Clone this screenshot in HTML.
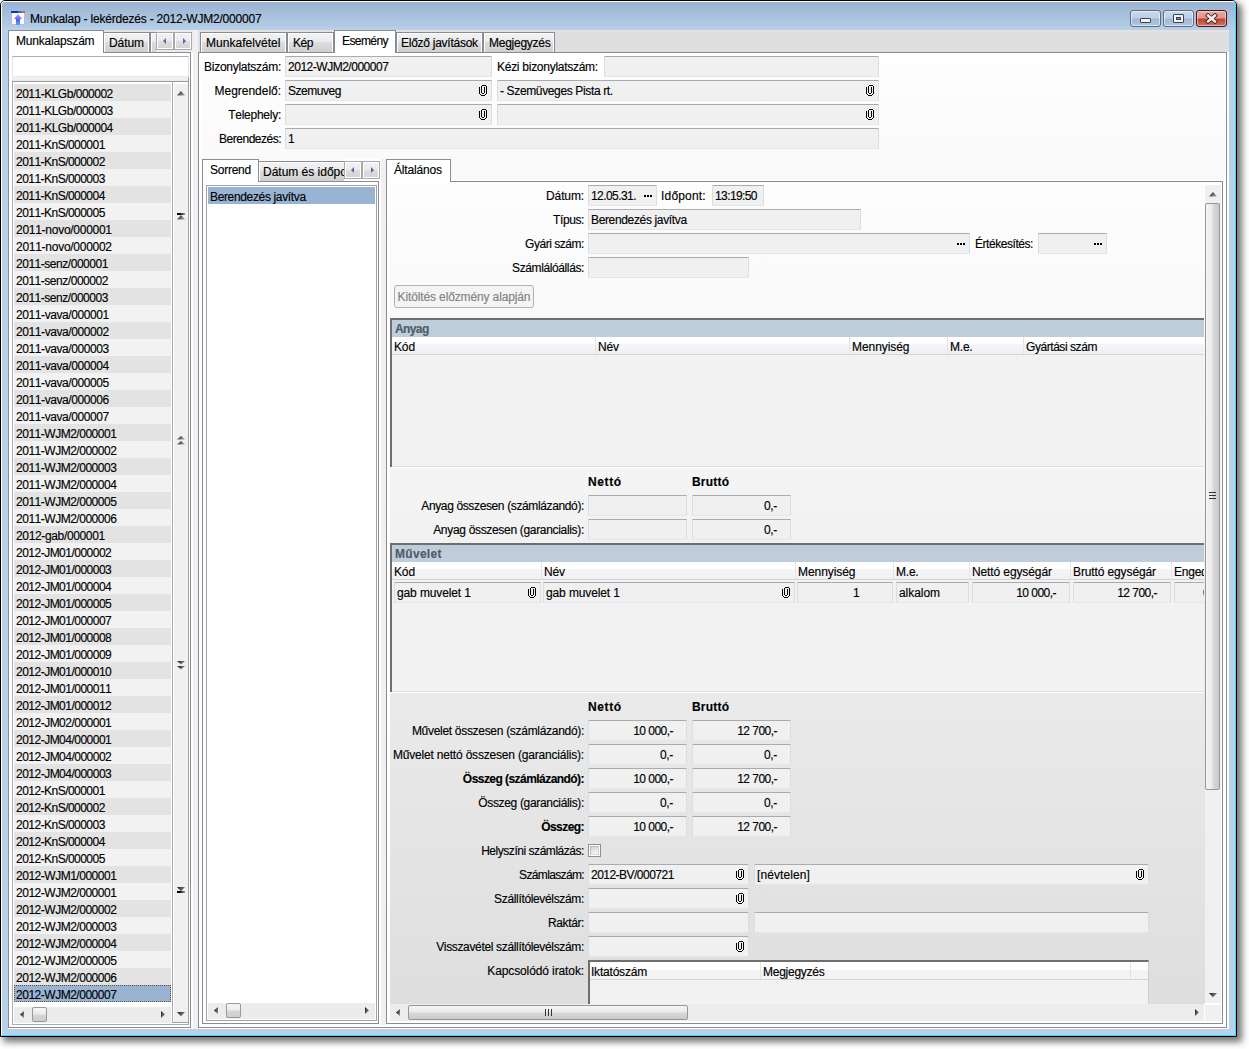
<!DOCTYPE html><html><head><meta charset="utf-8"><style>
html,body{margin:0;padding:0;width:1249px;height:1049px;overflow:hidden;background:#fff;}
body{position:relative;font-family:"Liberation Sans",sans-serif;font-size:12px;color:#000;}
div,svg{position:absolute;}
div{-webkit-text-stroke-width:0.15px;font-kerning:none;}
</style></head><body>
<div style="left:0px;top:0px;width:1237px;height:1037px;box-sizing:border-box;border:1px solid #000;border-radius:5px 5px 0 0;background:#b9d1ea;box-shadow:4px 4px 7px 1px rgba(0,0,0,0.55);"></div>
<div style="left:1px;top:1px;width:1235px;height:1035px;box-sizing:border-box;border:1px solid;border-color:#fff #36dcf8 #36dcf8 #fff;border-radius:4px 4px 0 0;"></div>
<div style="left:2px;top:2px;width:1233px;height:28px;background:linear-gradient(#99b3d1,#b4cce6 90%,#b9d1ea);border-radius:3px 3px 0 0;"></div>
<svg style="left:10px;top:10px" width="16" height="16" viewBox="0 0 16 16"><defs><linearGradient id="ia" x1="0" y1="0" x2="0" y2="1"><stop offset="0" stop-color="#a8a8ff"/><stop offset="0.55" stop-color="#5a5af0"/><stop offset="1" stop-color="#40b0ff"/></linearGradient></defs><rect x="1.5" y="1.5" width="13" height="13" fill="#fbfbf4" stroke="#b5b8f0" stroke-width="1"/><rect x="1" y="1" width="7" height="2" fill="#0033dd"/><rect x="8" y="1" width="4" height="2" fill="#3d6de6"/><rect x="12" y="1" width="3" height="2" fill="#e86040"/><path d="M8 4 L12 9 L10 9 L10 15 L6 15 L6 9 L4 9 Z" fill="url(#ia)"/></svg>
<div style="top:13px;line-height:13px;font-size:12px;white-space:nowrap;color:#000;letter-spacing:-0.20px;left:30px;">Munkalap - lekérdezés - 2012-WJM2/000007</div>
<div style="left:1130px;top:10px;width:31px;height:17px;box-sizing:border-box;border-radius:3px;border:1px solid #5e6b80;background:linear-gradient(#c9d9ec,#bdd0e6 45%,#9eb8d5 55%,#b3c8e0);box-shadow:inset 0 0 0 1px rgba(255,255,255,0.55);"></div>
<div style="left:1163px;top:10px;width:31px;height:17px;box-sizing:border-box;border-radius:3px;border:1px solid #5e6b80;background:linear-gradient(#c9d9ec,#bdd0e6 45%,#9eb8d5 55%,#b3c8e0);box-shadow:inset 0 0 0 1px rgba(255,255,255,0.55);"></div>
<div style="left:1196px;top:10px;width:31px;height:17px;box-sizing:border-box;border-radius:3px;border:1px solid #4b1414;background:linear-gradient(#eaa898,#e39888 45%,#c4432b 55%,#cf7868);box-shadow:inset 0 0 0 1px rgba(255,255,255,0.45);"></div>
<div style="left:1140px;top:18px;width:11px;height:5px;box-sizing:border-box;background:#f4f4f4;border:1px solid #3a4252;border-radius:1px;"></div>
<div style="left:1173px;top:14px;width:11px;height:9px;box-sizing:border-box;background:#f4f4f4;border:1px solid #3a4252;border-radius:1px;"></div>
<div style="left:1176px;top:17px;width:5px;height:3px;background:#7f94b4;border:1px solid #3a4252;box-sizing:border-box;"></div>
<svg style="left:1205px;top:13px" width="13" height="11" viewBox="0 0 13 11"><path d="M3 2.5 L10 8.5 M10 2.5 L3 8.5" stroke="#3b2020" stroke-width="4.2" stroke-linecap="square"/><path d="M3 2.5 L10 8.5 M10 2.5 L3 8.5" stroke="#f4f0f0" stroke-width="2.4" stroke-linecap="square"/></svg>
<div style="left:8px;top:30px;width:1221px;height:999px;background:#fff;"></div>
<div style="left:8px;top:30px;width:183px;height:22px;background:#e3e3e3;"></div>
<div style="left:8px;top:30px;width:183px;height:2px;background:#e6e4e1;"></div>
<div style="left:8px;top:52px;width:183px;height:976px;box-sizing:border-box;border:1px solid #898c95;background:#fff;"></div>
<div style="left:103px;top:32px;width:47px;height:20px;box-sizing:border-box;border:1px solid #898c95;border-bottom:none;background:linear-gradient(#f2f2f2,#ebebeb 45%,#dddddd 50%,#cfcfcf);box-shadow:inset 1px 1px 0 #fff, inset -1px 0 0 #fff;"></div>
<div style="top:37px;line-height:13px;font-size:12px;white-space:nowrap;color:#000;letter-spacing:-0.08px;left:109px;">Dátum</div>
<div style="left:150px;top:32px;width:6px;height:20px;box-sizing:border-box;border-left:1px solid #898c95;border-top:1px solid #898c95;background:linear-gradient(#f2f2f2,#ebebeb 45%,#dddddd 50%,#cfcfcf);box-shadow:inset 1px 1px 0 #fff;"></div>
<div style="left:8px;top:30px;width:96px;height:23px;box-sizing:border-box;border:1px solid #898c95;border-bottom:none;background:#fff;"></div>
<div style="top:35px;line-height:13px;font-size:12px;white-space:nowrap;color:#000;letter-spacing:-0.19px;left:16px;">Munkalapszám</div>
<div style="left:156px;top:30px;width:37px;height:22px;background:#ececec;"></div>
<div style="left:156px;top:32px;width:18px;height:18px;box-sizing:border-box;border:1px solid #a7a9ae;background:linear-gradient(#f2f2f2,#ebebeb 45%,#dddddd 55%,#d3d3d3);box-shadow:inset 1px 1px 0 #fff,inset -1px -1px 0 #fff;"></div>
<svg style="left:162px;top:37px" width="5" height="8"><path d="M4 1 L1 4 L4 7Z" fill="#5468ae"/></svg>
<div style="left:174px;top:32px;width:18px;height:18px;box-sizing:border-box;border:1px solid #a7a9ae;background:linear-gradient(#f2f2f2,#ebebeb 45%,#dddddd 55%,#d3d3d3);box-shadow:inset 1px 1px 0 #fff,inset -1px -1px 0 #fff;"></div>
<svg style="left:182px;top:37px" width="5" height="8"><path d="M1 1 L4 4 L1 7Z" fill="#5468ae"/></svg>
<div style="left:12px;top:56px;width:177px;height:21px;box-sizing:border-box;background:#fff;border:1px solid;border-color:#abadb3 #e2e3ea #e3e9ef #e2e3ea;"></div>
<div style="left:12px;top:77px;width:177px;height:5px;box-sizing:border-box;border-right:1px solid #a0a0a0;background:linear-gradient(#f4f4f4,#e8e8e8);"></div>
<div style="left:12px;top:81px;width:177px;height:944px;box-sizing:border-box;border:1px solid #abadb3;border-top-color:#9a9a9a;border-right-color:#a0a0a0;background:#fff;"></div>
<div style="left:14px;top:84px;width:157px;height:17px;background:#e3e3e3;"></div>
<div style="top:88px;line-height:13px;font-size:12px;white-space:nowrap;color:#000;letter-spacing:-0.50px;left:16px;">2011-KLGb/000002</div>
<div style="left:14px;top:101px;width:157px;height:17px;background:#f2f2f2;"></div>
<div style="top:105px;line-height:13px;font-size:12px;white-space:nowrap;color:#000;letter-spacing:-0.50px;left:16px;">2011-KLGb/000003</div>
<div style="left:14px;top:118px;width:157px;height:17px;background:#e3e3e3;"></div>
<div style="top:122px;line-height:13px;font-size:12px;white-space:nowrap;color:#000;letter-spacing:-0.50px;left:16px;">2011-KLGb/000004</div>
<div style="left:14px;top:135px;width:157px;height:17px;background:#f2f2f2;"></div>
<div style="top:139px;line-height:13px;font-size:12px;white-space:nowrap;color:#000;letter-spacing:-0.53px;left:16px;">2011-KnS/000001</div>
<div style="left:14px;top:152px;width:157px;height:17px;background:#e3e3e3;"></div>
<div style="top:156px;line-height:13px;font-size:12px;white-space:nowrap;color:#000;letter-spacing:-0.53px;left:16px;">2011-KnS/000002</div>
<div style="left:14px;top:169px;width:157px;height:17px;background:#f2f2f2;"></div>
<div style="top:173px;line-height:13px;font-size:12px;white-space:nowrap;color:#000;letter-spacing:-0.53px;left:16px;">2011-KnS/000003</div>
<div style="left:14px;top:186px;width:157px;height:17px;background:#e3e3e3;"></div>
<div style="top:190px;line-height:13px;font-size:12px;white-space:nowrap;color:#000;letter-spacing:-0.53px;left:16px;">2011-KnS/000004</div>
<div style="left:14px;top:203px;width:157px;height:17px;background:#f2f2f2;"></div>
<div style="top:207px;line-height:13px;font-size:12px;white-space:nowrap;color:#000;letter-spacing:-0.53px;left:16px;">2011-KnS/000005</div>
<div style="left:14px;top:220px;width:157px;height:17px;background:#e3e3e3;"></div>
<div style="top:224px;line-height:13px;font-size:12px;white-space:nowrap;color:#000;letter-spacing:-0.27px;left:16px;">2011-novo/000001</div>
<div style="left:14px;top:237px;width:157px;height:17px;background:#f2f2f2;"></div>
<div style="top:241px;line-height:13px;font-size:12px;white-space:nowrap;color:#000;letter-spacing:-0.27px;left:16px;">2011-novo/000002</div>
<div style="left:14px;top:254px;width:157px;height:17px;background:#e3e3e3;"></div>
<div style="top:258px;line-height:13px;font-size:12px;white-space:nowrap;color:#000;letter-spacing:-0.47px;left:16px;">2011-senz/000001</div>
<div style="left:14px;top:271px;width:157px;height:17px;background:#f2f2f2;"></div>
<div style="top:275px;line-height:13px;font-size:12px;white-space:nowrap;color:#000;letter-spacing:-0.47px;left:16px;">2011-senz/000002</div>
<div style="left:14px;top:288px;width:157px;height:17px;background:#e3e3e3;"></div>
<div style="top:292px;line-height:13px;font-size:12px;white-space:nowrap;color:#000;letter-spacing:-0.47px;left:16px;">2011-senz/000003</div>
<div style="left:14px;top:305px;width:157px;height:17px;background:#f2f2f2;"></div>
<div style="top:309px;line-height:13px;font-size:12px;white-space:nowrap;color:#000;letter-spacing:-0.41px;left:16px;">2011-vava/000001</div>
<div style="left:14px;top:322px;width:157px;height:17px;background:#e3e3e3;"></div>
<div style="top:326px;line-height:13px;font-size:12px;white-space:nowrap;color:#000;letter-spacing:-0.41px;left:16px;">2011-vava/000002</div>
<div style="left:14px;top:339px;width:157px;height:17px;background:#f2f2f2;"></div>
<div style="top:343px;line-height:13px;font-size:12px;white-space:nowrap;color:#000;letter-spacing:-0.41px;left:16px;">2011-vava/000003</div>
<div style="left:14px;top:356px;width:157px;height:17px;background:#e3e3e3;"></div>
<div style="top:360px;line-height:13px;font-size:12px;white-space:nowrap;color:#000;letter-spacing:-0.41px;left:16px;">2011-vava/000004</div>
<div style="left:14px;top:373px;width:157px;height:17px;background:#f2f2f2;"></div>
<div style="top:377px;line-height:13px;font-size:12px;white-space:nowrap;color:#000;letter-spacing:-0.41px;left:16px;">2011-vava/000005</div>
<div style="left:14px;top:390px;width:157px;height:17px;background:#e3e3e3;"></div>
<div style="top:394px;line-height:13px;font-size:12px;white-space:nowrap;color:#000;letter-spacing:-0.41px;left:16px;">2011-vava/000006</div>
<div style="left:14px;top:407px;width:157px;height:17px;background:#f2f2f2;"></div>
<div style="top:411px;line-height:13px;font-size:12px;white-space:nowrap;color:#000;letter-spacing:-0.41px;left:16px;">2011-vava/000007</div>
<div style="left:14px;top:424px;width:157px;height:17px;background:#e3e3e3;"></div>
<div style="top:428px;line-height:13px;font-size:12px;white-space:nowrap;color:#000;letter-spacing:-0.48px;left:16px;">2011-WJM2/000001</div>
<div style="left:14px;top:441px;width:157px;height:17px;background:#f2f2f2;"></div>
<div style="top:445px;line-height:13px;font-size:12px;white-space:nowrap;color:#000;letter-spacing:-0.48px;left:16px;">2011-WJM2/000002</div>
<div style="left:14px;top:458px;width:157px;height:17px;background:#e3e3e3;"></div>
<div style="top:462px;line-height:13px;font-size:12px;white-space:nowrap;color:#000;letter-spacing:-0.48px;left:16px;">2011-WJM2/000003</div>
<div style="left:14px;top:475px;width:157px;height:17px;background:#f2f2f2;"></div>
<div style="top:479px;line-height:13px;font-size:12px;white-space:nowrap;color:#000;letter-spacing:-0.48px;left:16px;">2011-WJM2/000004</div>
<div style="left:14px;top:492px;width:157px;height:17px;background:#e3e3e3;"></div>
<div style="top:496px;line-height:13px;font-size:12px;white-space:nowrap;color:#000;letter-spacing:-0.48px;left:16px;">2011-WJM2/000005</div>
<div style="left:14px;top:509px;width:157px;height:17px;background:#f2f2f2;"></div>
<div style="top:513px;line-height:13px;font-size:12px;white-space:nowrap;color:#000;letter-spacing:-0.48px;left:16px;">2011-WJM2/000006</div>
<div style="left:14px;top:526px;width:157px;height:17px;background:#e3e3e3;"></div>
<div style="top:530px;line-height:13px;font-size:12px;white-space:nowrap;color:#000;letter-spacing:-0.35px;left:16px;">2012-gab/000001</div>
<div style="left:14px;top:543px;width:157px;height:17px;background:#f2f2f2;"></div>
<div style="top:547px;line-height:13px;font-size:12px;white-space:nowrap;color:#000;letter-spacing:-0.51px;left:16px;">2012-JM01/000002</div>
<div style="left:14px;top:560px;width:157px;height:17px;background:#e3e3e3;"></div>
<div style="top:564px;line-height:13px;font-size:12px;white-space:nowrap;color:#000;letter-spacing:-0.51px;left:16px;">2012-JM01/000003</div>
<div style="left:14px;top:577px;width:157px;height:17px;background:#f2f2f2;"></div>
<div style="top:581px;line-height:13px;font-size:12px;white-space:nowrap;color:#000;letter-spacing:-0.51px;left:16px;">2012-JM01/000004</div>
<div style="left:14px;top:594px;width:157px;height:17px;background:#e3e3e3;"></div>
<div style="top:598px;line-height:13px;font-size:12px;white-space:nowrap;color:#000;letter-spacing:-0.51px;left:16px;">2012-JM01/000005</div>
<div style="left:14px;top:611px;width:157px;height:17px;background:#f2f2f2;"></div>
<div style="top:615px;line-height:13px;font-size:12px;white-space:nowrap;color:#000;letter-spacing:-0.51px;left:16px;">2012-JM01/000007</div>
<div style="left:14px;top:628px;width:157px;height:17px;background:#e3e3e3;"></div>
<div style="top:632px;line-height:13px;font-size:12px;white-space:nowrap;color:#000;letter-spacing:-0.51px;left:16px;">2012-JM01/000008</div>
<div style="left:14px;top:645px;width:157px;height:17px;background:#f2f2f2;"></div>
<div style="top:649px;line-height:13px;font-size:12px;white-space:nowrap;color:#000;letter-spacing:-0.51px;left:16px;">2012-JM01/000009</div>
<div style="left:14px;top:662px;width:157px;height:17px;background:#e3e3e3;"></div>
<div style="top:666px;line-height:13px;font-size:12px;white-space:nowrap;color:#000;letter-spacing:-0.51px;left:16px;">2012-JM01/000010</div>
<div style="left:14px;top:679px;width:157px;height:17px;background:#f2f2f2;"></div>
<div style="top:683px;line-height:13px;font-size:12px;white-space:nowrap;color:#000;letter-spacing:-0.51px;left:16px;">2012-JM01/000011</div>
<div style="left:14px;top:696px;width:157px;height:17px;background:#e3e3e3;"></div>
<div style="top:700px;line-height:13px;font-size:12px;white-space:nowrap;color:#000;letter-spacing:-0.51px;left:16px;">2012-JM01/000012</div>
<div style="left:14px;top:713px;width:157px;height:17px;background:#f2f2f2;"></div>
<div style="top:717px;line-height:13px;font-size:12px;white-space:nowrap;color:#000;letter-spacing:-0.51px;left:16px;">2012-JM02/000001</div>
<div style="left:14px;top:730px;width:157px;height:17px;background:#e3e3e3;"></div>
<div style="top:734px;line-height:13px;font-size:12px;white-space:nowrap;color:#000;letter-spacing:-0.51px;left:16px;">2012-JM04/000001</div>
<div style="left:14px;top:747px;width:157px;height:17px;background:#f2f2f2;"></div>
<div style="top:751px;line-height:13px;font-size:12px;white-space:nowrap;color:#000;letter-spacing:-0.51px;left:16px;">2012-JM04/000002</div>
<div style="left:14px;top:764px;width:157px;height:17px;background:#e3e3e3;"></div>
<div style="top:768px;line-height:13px;font-size:12px;white-space:nowrap;color:#000;letter-spacing:-0.51px;left:16px;">2012-JM04/000003</div>
<div style="left:14px;top:781px;width:157px;height:17px;background:#f2f2f2;"></div>
<div style="top:785px;line-height:13px;font-size:12px;white-space:nowrap;color:#000;letter-spacing:-0.53px;left:16px;">2012-KnS/000001</div>
<div style="left:14px;top:798px;width:157px;height:17px;background:#e3e3e3;"></div>
<div style="top:802px;line-height:13px;font-size:12px;white-space:nowrap;color:#000;letter-spacing:-0.53px;left:16px;">2012-KnS/000002</div>
<div style="left:14px;top:815px;width:157px;height:17px;background:#f2f2f2;"></div>
<div style="top:819px;line-height:13px;font-size:12px;white-space:nowrap;color:#000;letter-spacing:-0.53px;left:16px;">2012-KnS/000003</div>
<div style="left:14px;top:832px;width:157px;height:17px;background:#e3e3e3;"></div>
<div style="top:836px;line-height:13px;font-size:12px;white-space:nowrap;color:#000;letter-spacing:-0.53px;left:16px;">2012-KnS/000004</div>
<div style="left:14px;top:849px;width:157px;height:17px;background:#f2f2f2;"></div>
<div style="top:853px;line-height:13px;font-size:12px;white-space:nowrap;color:#000;letter-spacing:-0.53px;left:16px;">2012-KnS/000005</div>
<div style="left:14px;top:866px;width:157px;height:17px;background:#e3e3e3;"></div>
<div style="top:870px;line-height:13px;font-size:12px;white-space:nowrap;color:#000;letter-spacing:-0.48px;left:16px;">2012-WJM1/000001</div>
<div style="left:14px;top:883px;width:157px;height:17px;background:#f2f2f2;"></div>
<div style="top:887px;line-height:13px;font-size:12px;white-space:nowrap;color:#000;letter-spacing:-0.48px;left:16px;">2012-WJM2/000001</div>
<div style="left:14px;top:900px;width:157px;height:17px;background:#e3e3e3;"></div>
<div style="top:904px;line-height:13px;font-size:12px;white-space:nowrap;color:#000;letter-spacing:-0.48px;left:16px;">2012-WJM2/000002</div>
<div style="left:14px;top:917px;width:157px;height:17px;background:#f2f2f2;"></div>
<div style="top:921px;line-height:13px;font-size:12px;white-space:nowrap;color:#000;letter-spacing:-0.48px;left:16px;">2012-WJM2/000003</div>
<div style="left:14px;top:934px;width:157px;height:17px;background:#e3e3e3;"></div>
<div style="top:938px;line-height:13px;font-size:12px;white-space:nowrap;color:#000;letter-spacing:-0.48px;left:16px;">2012-WJM2/000004</div>
<div style="left:14px;top:951px;width:157px;height:17px;background:#f2f2f2;"></div>
<div style="top:955px;line-height:13px;font-size:12px;white-space:nowrap;color:#000;letter-spacing:-0.48px;left:16px;">2012-WJM2/000005</div>
<div style="left:14px;top:968px;width:157px;height:17px;background:#e3e3e3;"></div>
<div style="top:972px;line-height:13px;font-size:12px;white-space:nowrap;color:#000;letter-spacing:-0.48px;left:16px;">2012-WJM2/000006</div>
<div style="left:14px;top:985px;width:157px;height:17px;box-sizing:border-box;background:#99b4d3;border:1px dotted #6a5030;"></div>
<div style="top:989px;line-height:13px;font-size:12px;white-space:nowrap;color:#000;letter-spacing:-0.48px;left:16px;">2012-WJM2/000007</div>
<div style="left:172px;top:82px;width:1px;height:941px;background:#a8aab2;"></div>
<div style="left:174px;top:84px;width:14px;height:939px;background:#f0f0f0;"></div>
<div style="left:188px;top:84px;width:1px;height:939px;background:#a2a2a2;"></div>
<div style="left:173px;top:1022px;width:16px;height:1px;background:#a2a2a2;"></div>
<svg style="left:177px;top:91px" width="8" height="5"><defs><linearGradient id="g1" x1="0" y1="0" x2="1" y2="0.6"><stop offset="0" stop-color="#111"/><stop offset="1" stop-color="#9a9a9a"/></linearGradient></defs><path d="M0 4.5 L4.0 0 L8 4.5Z" fill="url(#g1)"/></svg>
<div style="left:177px;top:213px;width:8px;height:2px;background:linear-gradient(90deg,#000 30%,#9a9a9a);"></div>
<svg style="left:177px;top:215px" width="8" height="5"><defs><linearGradient id="g2" x1="0" y1="0" x2="1" y2="0.6"><stop offset="0" stop-color="#111"/><stop offset="1" stop-color="#9a9a9a"/></linearGradient></defs><path d="M0 4.5 L4.0 0 L8 4.5Z" fill="url(#g2)"/></svg>
<svg style="left:177px;top:436px" width="8" height="4"><defs><linearGradient id="g3" x1="0" y1="0" x2="1" y2="0.6"><stop offset="0" stop-color="#111"/><stop offset="1" stop-color="#9a9a9a"/></linearGradient></defs><path d="M0 3.5 L4.0 0 L8 3.5Z" fill="url(#g3)"/></svg>
<svg style="left:177px;top:441px" width="8" height="4"><defs><linearGradient id="g4" x1="0" y1="0" x2="1" y2="0.6"><stop offset="0" stop-color="#111"/><stop offset="1" stop-color="#9a9a9a"/></linearGradient></defs><path d="M0 3.5 L4.0 0 L8 3.5Z" fill="url(#g4)"/></svg>
<svg style="left:177px;top:661px" width="8" height="4"><defs><linearGradient id="g5" x1="0" y1="0" x2="1" y2="0.6"><stop offset="0" stop-color="#111"/><stop offset="1" stop-color="#9a9a9a"/></linearGradient></defs><path d="M0 0 L4.0 3.5 L8 0Z" fill="url(#g5)"/></svg>
<svg style="left:177px;top:666px" width="8" height="4"><defs><linearGradient id="g6" x1="0" y1="0" x2="1" y2="0.6"><stop offset="0" stop-color="#111"/><stop offset="1" stop-color="#9a9a9a"/></linearGradient></defs><path d="M0 0 L4.0 3.5 L8 0Z" fill="url(#g6)"/></svg>
<svg style="left:177px;top:887px" width="8" height="5"><defs><linearGradient id="g7" x1="0" y1="0" x2="1" y2="0.6"><stop offset="0" stop-color="#111"/><stop offset="1" stop-color="#9a9a9a"/></linearGradient></defs><path d="M0 0 L4.0 4.5 L8 0Z" fill="url(#g7)"/></svg>
<div style="left:177px;top:891px;width:8px;height:2px;background:linear-gradient(90deg,#000 30%,#9a9a9a);"></div>
<svg style="left:177px;top:1012px" width="8" height="5"><defs><linearGradient id="g8" x1="0" y1="0" x2="1" y2="0.6"><stop offset="0" stop-color="#111"/><stop offset="1" stop-color="#9a9a9a"/></linearGradient></defs><path d="M0 0 L4.0 4.5 L8 0Z" fill="url(#g8)"/></svg>
<div style="left:14px;top:1007px;width:157px;height:16px;background:#ececec;"></div>
<svg style="left:20px;top:1011px" width="4" height="7"><defs><linearGradient id="g9" x1="0" y1="0.5" x2="1" y2="1"><stop offset="0" stop-color="#111"/><stop offset="1" stop-color="#9a9a9a"/></linearGradient></defs><path d="M4 0 L0 3.5 L4 7Z" fill="url(#g9)"/></svg>
<svg style="left:161px;top:1011px" width="4" height="7"><defs><linearGradient id="g10" x1="0" y1="0" x2="1" y2="0.8"><stop offset="0" stop-color="#111"/><stop offset="1" stop-color="#9a9a9a"/></linearGradient></defs><path d="M0 0 L4 3.5 L0 7Z" fill="url(#g10)"/></svg>
<div style="left:32px;top:1007px;width:15px;height:15px;box-sizing:border-box;border:1px solid #9a9a9a;border-radius:2px;background:linear-gradient(#f6f6f6,#ebebeb 45%,#d6d6d6 55%,#cdcdcd);"></div>
<div style="left:193px;top:30px;width:5px;height:999px;background:#f0f0f0;"></div>
<div style="left:198px;top:30px;width:1031px;height:22px;background:#dfdfdf;"></div>
<div style="left:198px;top:30px;width:1031px;height:2px;background:#e4e2df;"></div>
<div style="left:198px;top:52px;width:1029px;height:976px;box-sizing:border-box;border:1px solid #898c95;background:#fff;"></div>
<div style="left:202px;top:57px;width:1023px;height:123px;background:linear-gradient(#fefefe,#f9f9f9);"></div>
<div style="left:200px;top:32px;width:87px;height:20px;box-sizing:border-box;border:1px solid #898c95;border-bottom:none;background:linear-gradient(#f2f2f2,#ebebeb 45%,#dddddd 50%,#cfcfcf);box-shadow:inset 1px 1px 0 #fff, inset -1px 0 0 #fff;"></div>
<div style="top:37px;line-height:13px;font-size:12px;white-space:nowrap;color:#000;letter-spacing:0.03px;left:206px;">Munkafelvétel</div>
<div style="left:287px;top:32px;width:47px;height:20px;box-sizing:border-box;border:1px solid #898c95;border-bottom:none;background:linear-gradient(#f2f2f2,#ebebeb 45%,#dddddd 50%,#cfcfcf);box-shadow:inset 1px 1px 0 #fff, inset -1px 0 0 #fff;"></div>
<div style="top:37px;line-height:13px;font-size:12px;white-space:nowrap;color:#000;letter-spacing:-0.46px;left:293px;">Kép</div>
<div style="left:396px;top:32px;width:87px;height:20px;box-sizing:border-box;border:1px solid #898c95;border-bottom:none;background:linear-gradient(#f2f2f2,#ebebeb 45%,#dddddd 50%,#cfcfcf);box-shadow:inset 1px 1px 0 #fff, inset -1px 0 0 #fff;"></div>
<div style="top:37px;line-height:13px;font-size:12px;white-space:nowrap;color:#000;letter-spacing:-0.26px;left:401px;">Előző javítások</div>
<div style="left:483px;top:32px;width:72px;height:20px;box-sizing:border-box;border:1px solid #898c95;border-bottom:none;background:linear-gradient(#f2f2f2,#ebebeb 45%,#dddddd 50%,#cfcfcf);box-shadow:inset 1px 1px 0 #fff, inset -1px 0 0 #fff;"></div>
<div style="top:37px;line-height:13px;font-size:12px;white-space:nowrap;color:#000;letter-spacing:-0.26px;left:489px;">Megjegyzés</div>
<div style="left:334px;top:30px;width:62px;height:23px;box-sizing:border-box;border:1px solid #898c95;border-bottom:none;background:#fff;"></div>
<div style="top:35px;line-height:13px;font-size:12px;white-space:nowrap;color:#000;letter-spacing:-0.58px;left:342px;">Esemény</div>
<div style="top:61px;line-height:13px;font-size:12px;white-space:nowrap;color:#000;letter-spacing:-0.27px;left:-319px;width:600px;text-align:right;">Bizonylatszám:</div>
<div style="top:85px;line-height:13px;font-size:12px;white-space:nowrap;color:#000;letter-spacing:-0.03px;left:-319px;width:600px;text-align:right;">Megrendelő:</div>
<div style="top:109px;line-height:13px;font-size:12px;white-space:nowrap;color:#000;letter-spacing:-0.25px;left:-319px;width:600px;text-align:right;">Telephely:</div>
<div style="top:133px;line-height:13px;font-size:12px;white-space:nowrap;color:#000;letter-spacing:-0.50px;left:-319px;width:600px;text-align:right;">Berendezés:</div>
<div style="left:285px;top:56px;width:207px;height:21px;box-sizing:border-box;background:#f0f0f0;border:1px solid;border-color:#a9abb1 #dadde3 #e3e7ec #dadde3;border-radius:1px;"></div>
<div style="top:61px;line-height:13px;font-size:12px;white-space:nowrap;color:#000;letter-spacing:-0.48px;left:288px;">2012-WJM2/000007</div>
<div style="left:285px;top:80px;width:207px;height:21px;box-sizing:border-box;background:#f0f0f0;border:1px solid;border-color:#a9abb1 #dadde3 #e3e7ec #dadde3;border-radius:1px;"></div>
<div style="top:85px;line-height:13px;font-size:12px;white-space:nowrap;color:#000;letter-spacing:-0.47px;left:288px;">Szemuveg</div>
<svg style="left:479px;top:85px" width="8" height="11" shape-rendering="crispEdges"><g fill="#000"><rect x="3" y="0" width="4" height="1"/><rect x="2" y="1" width="1" height="7"/><rect x="5" y="2" width="1" height="6"/><rect x="3" y="8" width="2" height="1"/><rect x="0" y="2" width="1" height="7"/><rect x="7" y="1" width="1" height="8"/><rect x="1" y="9" width="1" height="1"/><rect x="6" y="9" width="1" height="1"/><rect x="2" y="10" width="4" height="1"/></g></svg>
<div style="left:285px;top:104px;width:207px;height:21px;box-sizing:border-box;background:#f0f0f0;border:1px solid;border-color:#a9abb1 #dadde3 #e3e7ec #dadde3;border-radius:1px;"></div>
<svg style="left:479px;top:109px" width="8" height="11" shape-rendering="crispEdges"><g fill="#000"><rect x="3" y="0" width="4" height="1"/><rect x="2" y="1" width="1" height="7"/><rect x="5" y="2" width="1" height="6"/><rect x="3" y="8" width="2" height="1"/><rect x="0" y="2" width="1" height="7"/><rect x="7" y="1" width="1" height="8"/><rect x="1" y="9" width="1" height="1"/><rect x="6" y="9" width="1" height="1"/><rect x="2" y="10" width="4" height="1"/></g></svg>
<div style="left:285px;top:128px;width:594px;height:21px;box-sizing:border-box;background:#f0f0f0;border:1px solid;border-color:#a9abb1 #dadde3 #e3e7ec #dadde3;border-radius:1px;"></div>
<div style="top:133px;line-height:13px;font-size:12px;white-space:nowrap;color:#000;letter-spacing:-0.69px;left:288px;">1</div>
<div style="top:61px;line-height:13px;font-size:12px;white-space:nowrap;color:#000;letter-spacing:-0.27px;left:497px;">Kézi bizonylatszám:</div>
<div style="left:604px;top:56px;width:275px;height:21px;box-sizing:border-box;background:#f0f0f0;border:1px solid;border-color:#a9abb1 #dadde3 #e3e7ec #dadde3;border-radius:1px;"></div>
<div style="left:497px;top:80px;width:382px;height:21px;box-sizing:border-box;background:#f0f0f0;border:1px solid;border-color:#a9abb1 #dadde3 #e3e7ec #dadde3;border-radius:1px;"></div>
<div style="top:85px;line-height:13px;font-size:12px;white-space:nowrap;color:#000;letter-spacing:-0.36px;left:500px;">- Szemüveges Pista rt.</div>
<svg style="left:866px;top:85px" width="8" height="11" shape-rendering="crispEdges"><g fill="#000"><rect x="3" y="0" width="4" height="1"/><rect x="2" y="1" width="1" height="7"/><rect x="5" y="2" width="1" height="6"/><rect x="3" y="8" width="2" height="1"/><rect x="0" y="2" width="1" height="7"/><rect x="7" y="1" width="1" height="8"/><rect x="1" y="9" width="1" height="1"/><rect x="6" y="9" width="1" height="1"/><rect x="2" y="10" width="4" height="1"/></g></svg>
<div style="left:497px;top:104px;width:382px;height:21px;box-sizing:border-box;background:#f0f0f0;border:1px solid;border-color:#a9abb1 #dadde3 #e3e7ec #dadde3;border-radius:1px;"></div>
<svg style="left:866px;top:109px" width="8" height="11" shape-rendering="crispEdges"><g fill="#000"><rect x="3" y="0" width="4" height="1"/><rect x="2" y="1" width="1" height="7"/><rect x="5" y="2" width="1" height="6"/><rect x="3" y="8" width="2" height="1"/><rect x="0" y="2" width="1" height="7"/><rect x="7" y="1" width="1" height="8"/><rect x="1" y="9" width="1" height="1"/><rect x="6" y="9" width="1" height="1"/><rect x="2" y="10" width="4" height="1"/></g></svg>
<div style="left:202px;top:181px;width:177px;height:843px;box-sizing:border-box;border:1px solid #898c95;background:#fff;"></div>
<div style="left:258px;top:161px;width:86px;height:20px;overflow:hidden">
<div style="left:0px;top:0px;width:123px;height:20px;box-sizing:border-box;border:1px solid #898c95;border-bottom:none;background:linear-gradient(#f2f2f2,#ebebeb 45%,#dddddd 50%,#cfcfcf);box-shadow:inset 1px 1px 0 #fff, inset -1px 0 0 #fff;"></div>
<div style="top:5px;line-height:13px;font-size:12px;white-space:nowrap;color:#000;letter-spacing:-0.01px;left:5px;">Dátum és időpont</div>
</div>
<div style="left:344px;top:159px;width:37px;height:22px;background:#fff;"></div>
<div style="left:344px;top:161px;width:18px;height:18px;box-sizing:border-box;border:1px solid #a7a9ae;background:linear-gradient(#f2f2f2,#ebebeb 45%,#dddddd 55%,#d3d3d3);box-shadow:inset 1px 1px 0 #fff,inset -1px -1px 0 #fff;"></div>
<svg style="left:350px;top:166px" width="5" height="8"><path d="M4 1 L1 4 L4 7Z" fill="#5468ae"/></svg>
<div style="left:362px;top:161px;width:18px;height:18px;box-sizing:border-box;border:1px solid #a7a9ae;background:linear-gradient(#f2f2f2,#ebebeb 45%,#dddddd 55%,#d3d3d3);box-shadow:inset 1px 1px 0 #fff,inset -1px -1px 0 #fff;"></div>
<svg style="left:370px;top:166px" width="5" height="8"><path d="M1 1 L4 4 L1 7Z" fill="#5468ae"/></svg>
<div style="left:202px;top:159px;width:57px;height:23px;box-sizing:border-box;border:1px solid #898c95;border-bottom:none;background:#fff;"></div>
<div style="top:164px;line-height:13px;font-size:12px;white-space:nowrap;color:#000;letter-spacing:-0.25px;left:210px;">Sorrend</div>
<div style="left:206px;top:185px;width:171px;height:836px;box-sizing:border-box;border:1px solid #a0a2a8;background:#fff;"></div>
<div style="left:208px;top:187px;width:167px;height:17px;background:#99b4d3;"></div>
<div style="top:191px;line-height:13px;font-size:12px;white-space:nowrap;color:#000;letter-spacing:-0.35px;left:210px;">Berendezés javítva</div>
<div style="left:208px;top:1003px;width:167px;height:16px;background:#ececec;"></div>
<svg style="left:214px;top:1007px" width="4" height="7"><defs><linearGradient id="g11" x1="0" y1="0.5" x2="1" y2="1"><stop offset="0" stop-color="#111"/><stop offset="1" stop-color="#9a9a9a"/></linearGradient></defs><path d="M4 0 L0 3.5 L4 7Z" fill="url(#g11)"/></svg>
<svg style="left:365px;top:1007px" width="4" height="7"><defs><linearGradient id="g12" x1="0" y1="0" x2="1" y2="0.8"><stop offset="0" stop-color="#111"/><stop offset="1" stop-color="#9a9a9a"/></linearGradient></defs><path d="M0 0 L4 3.5 L0 7Z" fill="url(#g12)"/></svg>
<div style="left:226px;top:1003px;width:15px;height:15px;box-sizing:border-box;border:1px solid #9a9a9a;border-radius:2px;background:linear-gradient(#f6f6f6,#ebebeb 45%,#d6d6d6 55%,#cdcdcd);"></div>
<div style="left:381px;top:159px;width:5px;height:866px;background:#f0f0f0;"></div>
<div style="left:386px;top:181px;width:837px;height:843px;box-sizing:border-box;border:1px solid #898c95;background:#fff;"></div>
<div style="left:390px;top:185px;width:815px;height:819px;background:linear-gradient(#fdfdfd,#f4f4f4 36%,#eaeaea 62%,#dedede);"></div>
<div style="left:386px;top:159px;width:65px;height:23px;box-sizing:border-box;border:1px solid #898c95;border-bottom:none;background:#fff;"></div>
<div style="top:164px;line-height:13px;font-size:12px;white-space:nowrap;color:#000;letter-spacing:-0.16px;left:394px;">Általános</div>
<div style="top:190px;line-height:13px;font-size:12px;white-space:nowrap;color:#000;letter-spacing:-0.12px;left:-16px;width:600px;text-align:right;">Dátum:</div>
<div style="left:588px;top:185px;width:69px;height:21px;box-sizing:border-box;background:#f0f0f0;border:1px solid;border-color:#a9abb1 #dadde3 #e3e7ec #dadde3;border-radius:1px;"></div>
<div style="top:190px;line-height:13px;font-size:12px;white-space:nowrap;color:#000;letter-spacing:-0.57px;left:591px;">12.05.31.</div>
<svg style="left:644px;top:195px" width="8" height="2" shape-rendering="crispEdges"><g fill="#000"><rect x="0" y="0" width="2" height="2"/><rect x="3" y="0" width="2" height="2"/><rect x="6" y="0" width="2" height="2"/></g></svg>
<div style="top:190px;line-height:13px;font-size:12px;white-space:nowrap;color:#000;letter-spacing:0.19px;left:661px;">Időpont:</div>
<div style="left:712px;top:185px;width:52px;height:21px;box-sizing:border-box;background:#f0f0f0;border:1px solid;border-color:#a9abb1 #dadde3 #e3e7ec #dadde3;border-radius:1px;"></div>
<div style="top:190px;line-height:13px;font-size:12px;white-space:nowrap;color:#000;letter-spacing:-0.60px;left:715px;">13:19:50</div>
<div style="top:214px;line-height:13px;font-size:12px;white-space:nowrap;color:#000;letter-spacing:-0.40px;left:-16px;width:600px;text-align:right;">Típus:</div>
<div style="left:588px;top:209px;width:273px;height:21px;box-sizing:border-box;background:#f0f0f0;border:1px solid;border-color:#a9abb1 #dadde3 #e3e7ec #dadde3;border-radius:1px;"></div>
<div style="top:214px;line-height:13px;font-size:12px;white-space:nowrap;color:#000;letter-spacing:-0.35px;left:591px;">Berendezés javítva</div>
<div style="top:238px;line-height:13px;font-size:12px;white-space:nowrap;color:#000;letter-spacing:-0.46px;left:-16px;width:600px;text-align:right;">Gyári szám:</div>
<div style="left:588px;top:233px;width:382px;height:21px;box-sizing:border-box;background:#f0f0f0;border:1px solid;border-color:#a9abb1 #dadde3 #e3e7ec #dadde3;border-radius:1px;"></div>
<svg style="left:957px;top:243px" width="8" height="2" shape-rendering="crispEdges"><g fill="#000"><rect x="0" y="0" width="2" height="2"/><rect x="3" y="0" width="2" height="2"/><rect x="6" y="0" width="2" height="2"/></g></svg>
<div style="top:238px;line-height:13px;font-size:12px;white-space:nowrap;color:#000;letter-spacing:-0.45px;left:975px;">Értékesítés:</div>
<div style="left:1038px;top:233px;width:69px;height:21px;box-sizing:border-box;background:#f0f0f0;border:1px solid;border-color:#a9abb1 #dadde3 #e3e7ec #dadde3;border-radius:1px;"></div>
<svg style="left:1094px;top:243px" width="8" height="2" shape-rendering="crispEdges"><g fill="#000"><rect x="0" y="0" width="2" height="2"/><rect x="3" y="0" width="2" height="2"/><rect x="6" y="0" width="2" height="2"/></g></svg>
<div style="top:262px;line-height:13px;font-size:12px;white-space:nowrap;color:#000;letter-spacing:-0.39px;left:-16px;width:600px;text-align:right;">Számlálóállás:</div>
<div style="left:588px;top:257px;width:161px;height:21px;box-sizing:border-box;background:#f0f0f0;border:1px solid;border-color:#a9abb1 #dadde3 #e3e7ec #dadde3;border-radius:1px;"></div>
<div style="left:394px;top:285px;width:140px;height:23px;box-sizing:border-box;border:1px solid #adb2b5;border-radius:3px;background:#f4f4f4;"></div>
<div style="top:291px;line-height:13px;font-size:12px;white-space:nowrap;color:#838383;letter-spacing:-0.13px;left:164px;width:600px;text-align:center;">Kitöltés előzmény alapján</div>
<div style="left:390px;top:318px;width:814px;height:149px;box-sizing:border-box;border-left:2px solid #6e6e6e;border-top:2px solid #6e6e6e;background:#f2f2f2;"></div>
<div style="left:392px;top:320px;width:812px;height:17px;background:#bfcddb;"></div>
<div style="top:323px;line-height:13px;font-size:12px;white-space:nowrap;color:#4f5b6b;font-weight:bold;letter-spacing:-0.60px;left:395px;">Anyag</div>
<div style="left:392px;top:337px;width:812px;height:17px;background:linear-gradient(#ffffff 42%,#f5f5f7 44%,#f0f0f2);"></div>
<div style="left:392px;top:354px;width:812px;height:1px;background:#d5d5d5;"></div>
<div style="left:392px;top:337px;width:812px;height:17px;overflow:hidden">
<div style="top:4px;line-height:13px;font-size:12px;white-space:nowrap;color:#000;letter-spacing:-0.13px;left:2px;">Kód</div>
<div style="left:203px;top:0px;width:1px;height:17px;background:#e4e4e4;"></div>
<div style="top:4px;line-height:13px;font-size:12px;white-space:nowrap;color:#000;letter-spacing:-0.12px;left:206px;">Név</div>
<div style="left:457px;top:0px;width:1px;height:17px;background:#e4e4e4;"></div>
<div style="top:4px;line-height:13px;font-size:12px;white-space:nowrap;color:#000;letter-spacing:-0.07px;left:460px;">Mennyiség</div>
<div style="left:555px;top:0px;width:1px;height:17px;background:#e4e4e4;"></div>
<div style="top:4px;line-height:13px;font-size:12px;white-space:nowrap;color:#000;letter-spacing:-0.22px;left:558px;">M.e.</div>
<div style="left:631px;top:0px;width:1px;height:17px;background:#e4e4e4;"></div>
<div style="top:4px;line-height:13px;font-size:12px;white-space:nowrap;color:#000;letter-spacing:-0.44px;left:634px;">Gyártási szám</div>
</div>
<div style="left:392px;top:466px;width:812px;height:1px;background:#dedede;"></div>
<div style="left:390px;top:467px;width:814px;height:1px;background:#ffffff;"></div>
<div style="top:476px;line-height:13px;font-size:12px;white-space:nowrap;color:#000;font-weight:bold;letter-spacing:0.60px;left:588px;">Nettó</div>
<div style="top:476px;line-height:13px;font-size:12px;white-space:nowrap;color:#000;font-weight:bold;letter-spacing:0.20px;left:692px;">Bruttó</div>
<div style="top:500px;line-height:13px;font-size:12px;white-space:nowrap;color:#000;letter-spacing:-0.37px;left:-16px;width:600px;text-align:right;">Anyag összesen (számlázandó):</div>
<div style="left:588px;top:495px;width:99px;height:21px;box-sizing:border-box;background:#f0f0f0;border:1px solid;border-color:#a9abb1 #dadde3 #e3e7ec #dadde3;border-radius:1px;"></div>
<div style="left:692px;top:495px;width:99px;height:21px;box-sizing:border-box;background:#f0f0f0;border:1px solid;border-color:#a9abb1 #dadde3 #e3e7ec #dadde3;border-radius:1px;"></div>
<div style="top:500px;line-height:13px;font-size:12px;white-space:nowrap;color:#000;letter-spacing:-0.34px;left:177px;width:600px;text-align:right;">0,-</div>
<div style="top:524px;line-height:13px;font-size:12px;white-space:nowrap;color:#000;letter-spacing:-0.32px;left:-16px;width:600px;text-align:right;">Anyag összesen (garancialis):</div>
<div style="left:588px;top:519px;width:99px;height:21px;box-sizing:border-box;background:#f0f0f0;border:1px solid;border-color:#a9abb1 #dadde3 #e3e7ec #dadde3;border-radius:1px;"></div>
<div style="left:692px;top:519px;width:99px;height:21px;box-sizing:border-box;background:#f0f0f0;border:1px solid;border-color:#a9abb1 #dadde3 #e3e7ec #dadde3;border-radius:1px;"></div>
<div style="top:524px;line-height:13px;font-size:12px;white-space:nowrap;color:#000;letter-spacing:-0.34px;left:177px;width:600px;text-align:right;">0,-</div>
<div style="left:390px;top:543px;width:814px;height:149px;box-sizing:border-box;border-left:2px solid #6e6e6e;border-top:2px solid #6e6e6e;background:#f2f2f2;"></div>
<div style="left:392px;top:545px;width:812px;height:17px;background:#bfcddb;"></div>
<div style="top:548px;line-height:13px;font-size:12px;white-space:nowrap;color:#4f5b6b;font-weight:bold;letter-spacing:0.30px;left:395px;">Művelet</div>
<div style="left:392px;top:562px;width:812px;height:17px;background:linear-gradient(#ffffff 42%,#f5f5f7 44%,#f0f0f2);"></div>
<div style="left:392px;top:579px;width:812px;height:1px;background:#d5d5d5;"></div>
<div style="left:392px;top:562px;width:812px;height:17px;overflow:hidden">
<div style="top:4px;line-height:13px;font-size:12px;white-space:nowrap;color:#000;letter-spacing:-0.13px;left:2px;">Kód</div>
<div style="left:149px;top:0px;width:1px;height:17px;background:#e4e4e4;"></div>
<div style="top:4px;line-height:13px;font-size:12px;white-space:nowrap;color:#000;letter-spacing:-0.12px;left:152px;">Név</div>
<div style="left:403px;top:0px;width:1px;height:17px;background:#e4e4e4;"></div>
<div style="top:4px;line-height:13px;font-size:12px;white-space:nowrap;color:#000;letter-spacing:-0.07px;left:406px;">Mennyiség</div>
<div style="left:501px;top:0px;width:1px;height:17px;background:#e4e4e4;"></div>
<div style="top:4px;line-height:13px;font-size:12px;white-space:nowrap;color:#000;letter-spacing:-0.22px;left:504px;">M.e.</div>
<div style="left:577px;top:0px;width:1px;height:17px;background:#e4e4e4;"></div>
<div style="top:4px;line-height:13px;font-size:12px;white-space:nowrap;color:#000;letter-spacing:-0.11px;left:580px;">Nettó egységár</div>
<div style="left:678px;top:0px;width:1px;height:17px;background:#e4e4e4;"></div>
<div style="top:4px;line-height:13px;font-size:12px;white-space:nowrap;color:#000;letter-spacing:-0.12px;left:681px;">Bruttó egységár</div>
<div style="left:779px;top:0px;width:1px;height:17px;background:#e4e4e4;"></div>
<div style="top:4px;line-height:13px;font-size:12px;white-space:nowrap;color:#000;letter-spacing:-0.24px;left:782px;">Engedmény</div>
</div>
<div style="left:392px;top:691px;width:812px;height:1px;background:#dedede;"></div>
<div style="left:390px;top:692px;width:814px;height:1px;background:#ffffff;"></div>
<div style="left:394px;top:582px;width:147px;height:21px;box-sizing:border-box;background:#f0f0f0;border:1px solid;border-color:#a9abb1 #dadde3 #e3e7ec #dadde3;border-radius:1px;"></div>
<div style="top:587px;line-height:13px;font-size:12px;white-space:nowrap;color:#000;letter-spacing:-0.12px;left:397px;">gab muvelet 1</div>
<svg style="left:528px;top:587px" width="8" height="11" shape-rendering="crispEdges"><g fill="#000"><rect x="3" y="0" width="4" height="1"/><rect x="2" y="1" width="1" height="7"/><rect x="5" y="2" width="1" height="6"/><rect x="3" y="8" width="2" height="1"/><rect x="0" y="2" width="1" height="7"/><rect x="7" y="1" width="1" height="8"/><rect x="1" y="9" width="1" height="1"/><rect x="6" y="9" width="1" height="1"/><rect x="2" y="10" width="4" height="1"/></g></svg>
<div style="left:543px;top:582px;width:252px;height:21px;box-sizing:border-box;background:#f0f0f0;border:1px solid;border-color:#a9abb1 #dadde3 #e3e7ec #dadde3;border-radius:1px;"></div>
<div style="top:587px;line-height:13px;font-size:12px;white-space:nowrap;color:#000;letter-spacing:-0.12px;left:546px;">gab muvelet 1</div>
<svg style="left:782px;top:587px" width="8" height="11" shape-rendering="crispEdges"><g fill="#000"><rect x="3" y="0" width="4" height="1"/><rect x="2" y="1" width="1" height="7"/><rect x="5" y="2" width="1" height="6"/><rect x="3" y="8" width="2" height="1"/><rect x="0" y="2" width="1" height="7"/><rect x="7" y="1" width="1" height="8"/><rect x="1" y="9" width="1" height="1"/><rect x="6" y="9" width="1" height="1"/><rect x="2" y="10" width="4" height="1"/></g></svg>
<div style="left:797px;top:582px;width:96px;height:21px;box-sizing:border-box;background:#f0f0f0;border:1px solid;border-color:#a9abb1 #dadde3 #e3e7ec #dadde3;border-radius:1px;"></div>
<div style="top:587px;line-height:13px;font-size:12px;white-space:nowrap;color:#000;letter-spacing:-0.69px;left:259px;width:600px;text-align:right;">1</div>
<div style="left:896px;top:582px;width:73px;height:21px;box-sizing:border-box;background:#f0f0f0;border:1px solid;border-color:#a9abb1 #dadde3 #e3e7ec #dadde3;border-radius:1px;"></div>
<div style="top:587px;line-height:13px;font-size:12px;white-space:nowrap;color:#000;letter-spacing:-0.06px;left:899px;">alkalom</div>
<div style="left:972px;top:582px;width:98px;height:21px;box-sizing:border-box;background:#f0f0f0;border:1px solid;border-color:#a9abb1 #dadde3 #e3e7ec #dadde3;border-radius:1px;"></div>
<div style="top:587px;line-height:13px;font-size:12px;white-space:nowrap;color:#000;letter-spacing:-0.52px;left:456px;width:600px;text-align:right;">10 000,-</div>
<div style="left:1073px;top:582px;width:98px;height:21px;box-sizing:border-box;background:#f0f0f0;border:1px solid;border-color:#a9abb1 #dadde3 #e3e7ec #dadde3;border-radius:1px;"></div>
<div style="top:587px;line-height:13px;font-size:12px;white-space:nowrap;color:#000;letter-spacing:-0.52px;left:557px;width:600px;text-align:right;">12 700,-</div>
<div style="left:1174px;top:582px;width:30px;height:21px;overflow:hidden">
<div style="left:0px;top:0px;width:56px;height:21px;box-sizing:border-box;background:#f0f0f0;border:1px solid;border-color:#a9abb1 #dadde3 #e3e7ec #dadde3;border-radius:1px;"></div>
<div style="top:5px;line-height:13px;font-size:12px;white-space:nowrap;color:#000;letter-spacing:-0.34px;left:-558px;width:600px;text-align:right;">0,-</div>
</div>
<div style="top:701px;line-height:13px;font-size:12px;white-space:nowrap;color:#000;font-weight:bold;letter-spacing:0.60px;left:588px;">Nettó</div>
<div style="top:701px;line-height:13px;font-size:12px;white-space:nowrap;color:#000;font-weight:bold;letter-spacing:0.20px;left:692px;">Bruttó</div>
<div style="top:725px;line-height:13px;font-size:12px;white-space:nowrap;color:#000;letter-spacing:-0.30px;left:-16px;width:600px;text-align:right;">Művelet összesen (számlázandó):</div>
<div style="left:588px;top:720px;width:99px;height:21px;box-sizing:border-box;background:#f0f0f0;border:1px solid;border-color:#a9abb1 #dadde3 #e3e7ec #dadde3;border-radius:1px;"></div>
<div style="top:725px;line-height:13px;font-size:12px;white-space:nowrap;color:#000;letter-spacing:-0.52px;left:73px;width:600px;text-align:right;">10 000,-</div>
<div style="left:692px;top:720px;width:99px;height:21px;box-sizing:border-box;background:#f0f0f0;border:1px solid;border-color:#a9abb1 #dadde3 #e3e7ec #dadde3;border-radius:1px;"></div>
<div style="top:725px;line-height:13px;font-size:12px;white-space:nowrap;color:#000;letter-spacing:-0.52px;left:177px;width:600px;text-align:right;">12 700,-</div>
<div style="top:749px;line-height:13px;font-size:12px;white-space:nowrap;color:#000;letter-spacing:-0.19px;left:-16px;width:600px;text-align:right;">Művelet nettó összesen (garanciális):</div>
<div style="left:588px;top:744px;width:99px;height:21px;box-sizing:border-box;background:#f0f0f0;border:1px solid;border-color:#a9abb1 #dadde3 #e3e7ec #dadde3;border-radius:1px;"></div>
<div style="top:749px;line-height:13px;font-size:12px;white-space:nowrap;color:#000;letter-spacing:-0.34px;left:73px;width:600px;text-align:right;">0,-</div>
<div style="left:692px;top:744px;width:99px;height:21px;box-sizing:border-box;background:#f0f0f0;border:1px solid;border-color:#a9abb1 #dadde3 #e3e7ec #dadde3;border-radius:1px;"></div>
<div style="top:749px;line-height:13px;font-size:12px;white-space:nowrap;color:#000;letter-spacing:-0.34px;left:177px;width:600px;text-align:right;">0,-</div>
<div style="top:773px;line-height:13px;font-size:12px;white-space:nowrap;color:#000;font-weight:bold;letter-spacing:-0.55px;left:-16px;width:600px;text-align:right;">Összeg (számlázandó):</div>
<div style="left:588px;top:768px;width:99px;height:21px;box-sizing:border-box;background:#f0f0f0;border:1px solid;border-color:#a9abb1 #dadde3 #e3e7ec #dadde3;border-radius:1px;"></div>
<div style="top:773px;line-height:13px;font-size:12px;white-space:nowrap;color:#000;letter-spacing:-0.52px;left:73px;width:600px;text-align:right;">10 000,-</div>
<div style="left:692px;top:768px;width:99px;height:21px;box-sizing:border-box;background:#f0f0f0;border:1px solid;border-color:#a9abb1 #dadde3 #e3e7ec #dadde3;border-radius:1px;"></div>
<div style="top:773px;line-height:13px;font-size:12px;white-space:nowrap;color:#000;letter-spacing:-0.52px;left:177px;width:600px;text-align:right;">12 700,-</div>
<div style="top:797px;line-height:13px;font-size:12px;white-space:nowrap;color:#000;letter-spacing:-0.33px;left:-16px;width:600px;text-align:right;">Összeg (garanciális):</div>
<div style="left:588px;top:792px;width:99px;height:21px;box-sizing:border-box;background:#f0f0f0;border:1px solid;border-color:#a9abb1 #dadde3 #e3e7ec #dadde3;border-radius:1px;"></div>
<div style="top:797px;line-height:13px;font-size:12px;white-space:nowrap;color:#000;letter-spacing:-0.34px;left:73px;width:600px;text-align:right;">0,-</div>
<div style="left:692px;top:792px;width:99px;height:21px;box-sizing:border-box;background:#f0f0f0;border:1px solid;border-color:#a9abb1 #dadde3 #e3e7ec #dadde3;border-radius:1px;"></div>
<div style="top:797px;line-height:13px;font-size:12px;white-space:nowrap;color:#000;letter-spacing:-0.34px;left:177px;width:600px;text-align:right;">0,-</div>
<div style="top:821px;line-height:13px;font-size:12px;white-space:nowrap;color:#000;font-weight:bold;letter-spacing:-0.55px;left:-16px;width:600px;text-align:right;">Összeg:</div>
<div style="left:588px;top:816px;width:99px;height:21px;box-sizing:border-box;background:#f0f0f0;border:1px solid;border-color:#a9abb1 #dadde3 #e3e7ec #dadde3;border-radius:1px;"></div>
<div style="top:821px;line-height:13px;font-size:12px;white-space:nowrap;color:#000;letter-spacing:-0.52px;left:73px;width:600px;text-align:right;">10 000,-</div>
<div style="left:692px;top:816px;width:99px;height:21px;box-sizing:border-box;background:#f0f0f0;border:1px solid;border-color:#a9abb1 #dadde3 #e3e7ec #dadde3;border-radius:1px;"></div>
<div style="top:821px;line-height:13px;font-size:12px;white-space:nowrap;color:#000;letter-spacing:-0.52px;left:177px;width:600px;text-align:right;">12 700,-</div>
<div style="top:845px;line-height:13px;font-size:12px;white-space:nowrap;color:#000;letter-spacing:-0.46px;left:-16px;width:600px;text-align:right;">Helyszíni számlázás:</div>
<div style="left:588px;top:844px;width:13px;height:13px;box-sizing:border-box;border:1px solid #8b8f8f;background:#fff;"></div>
<div style="left:590px;top:846px;width:9px;height:9px;box-sizing:border-box;border:1px solid;border-color:#b3b7bf #c9cccf #dcdcdc #b3b7bf;background:linear-gradient(160deg,#cfd3da,#e6e8ea 50%,#f5f5f5);"></div>
<div style="top:869px;line-height:13px;font-size:12px;white-space:nowrap;color:#000;letter-spacing:-0.64px;left:-16px;width:600px;text-align:right;">Számlaszám:</div>
<div style="left:588px;top:864px;width:161px;height:21px;box-sizing:border-box;background:#f0f0f0;border:1px solid;border-color:#a9abb1 #dadde3 #e3e7ec #dadde3;border-radius:1px;"></div>
<div style="top:869px;line-height:13px;font-size:12px;white-space:nowrap;color:#000;letter-spacing:-0.52px;left:591px;">2012-BV/000721</div>
<svg style="left:736px;top:869px" width="8" height="11" shape-rendering="crispEdges"><g fill="#000"><rect x="3" y="0" width="4" height="1"/><rect x="2" y="1" width="1" height="7"/><rect x="5" y="2" width="1" height="6"/><rect x="3" y="8" width="2" height="1"/><rect x="0" y="2" width="1" height="7"/><rect x="7" y="1" width="1" height="8"/><rect x="1" y="9" width="1" height="1"/><rect x="6" y="9" width="1" height="1"/><rect x="2" y="10" width="4" height="1"/></g></svg>
<div style="left:754px;top:864px;width:395px;height:21px;box-sizing:border-box;background:#f0f0f0;border:1px solid;border-color:#a9abb1 #dadde3 #e3e7ec #dadde3;border-radius:1px;"></div>
<div style="top:869px;line-height:13px;font-size:12px;white-space:nowrap;color:#000;letter-spacing:0.09px;left:757px;">[névtelen]</div>
<svg style="left:1136px;top:869px" width="8" height="11" shape-rendering="crispEdges"><g fill="#000"><rect x="3" y="0" width="4" height="1"/><rect x="2" y="1" width="1" height="7"/><rect x="5" y="2" width="1" height="6"/><rect x="3" y="8" width="2" height="1"/><rect x="0" y="2" width="1" height="7"/><rect x="7" y="1" width="1" height="8"/><rect x="1" y="9" width="1" height="1"/><rect x="6" y="9" width="1" height="1"/><rect x="2" y="10" width="4" height="1"/></g></svg>
<div style="top:893px;line-height:13px;font-size:12px;white-space:nowrap;color:#000;letter-spacing:-0.34px;left:-16px;width:600px;text-align:right;">Szállítólevélszám:</div>
<div style="left:588px;top:888px;width:161px;height:21px;box-sizing:border-box;background:#f0f0f0;border:1px solid;border-color:#a9abb1 #dadde3 #e3e7ec #dadde3;border-radius:1px;"></div>
<svg style="left:736px;top:893px" width="8" height="11" shape-rendering="crispEdges"><g fill="#000"><rect x="3" y="0" width="4" height="1"/><rect x="2" y="1" width="1" height="7"/><rect x="5" y="2" width="1" height="6"/><rect x="3" y="8" width="2" height="1"/><rect x="0" y="2" width="1" height="7"/><rect x="7" y="1" width="1" height="8"/><rect x="1" y="9" width="1" height="1"/><rect x="6" y="9" width="1" height="1"/><rect x="2" y="10" width="4" height="1"/></g></svg>
<div style="top:917px;line-height:13px;font-size:12px;white-space:nowrap;color:#000;letter-spacing:-0.39px;left:-16px;width:600px;text-align:right;">Raktár:</div>
<div style="left:588px;top:912px;width:161px;height:21px;box-sizing:border-box;background:#f0f0f0;border:1px solid;border-color:#a9abb1 #dadde3 #e3e7ec #dadde3;border-radius:1px;"></div>
<div style="left:754px;top:912px;width:395px;height:21px;box-sizing:border-box;background:#f0f0f0;border:1px solid;border-color:#a9abb1 #dadde3 #e3e7ec #dadde3;border-radius:1px;"></div>
<div style="top:941px;line-height:13px;font-size:12px;white-space:nowrap;color:#000;letter-spacing:-0.34px;left:-16px;width:600px;text-align:right;">Visszavétel szállítólevélszám:</div>
<div style="left:588px;top:936px;width:161px;height:21px;box-sizing:border-box;background:#f0f0f0;border:1px solid;border-color:#a9abb1 #dadde3 #e3e7ec #dadde3;border-radius:1px;"></div>
<svg style="left:736px;top:941px" width="8" height="11" shape-rendering="crispEdges"><g fill="#000"><rect x="3" y="0" width="4" height="1"/><rect x="2" y="1" width="1" height="7"/><rect x="5" y="2" width="1" height="6"/><rect x="3" y="8" width="2" height="1"/><rect x="0" y="2" width="1" height="7"/><rect x="7" y="1" width="1" height="8"/><rect x="1" y="9" width="1" height="1"/><rect x="6" y="9" width="1" height="1"/><rect x="2" y="10" width="4" height="1"/></g></svg>
<div style="top:965px;line-height:13px;font-size:12px;white-space:nowrap;color:#000;letter-spacing:-0.11px;left:-16px;width:600px;text-align:right;">Kapcsolódó iratok:</div>
<div style="left:588px;top:960px;width:561px;height:45px;box-sizing:border-box;border-left:2px solid #6e6e6e;border-top:2px solid #6e6e6e;border-right:1px solid #cfcfcf;background:#f2f2f2;"></div>
<div style="left:590px;top:962px;width:558px;height:17px;background:linear-gradient(#ffffff 45%,#f3f3f3 50%,#f3f3f3);"></div>
<div style="left:590px;top:979px;width:558px;height:1px;background:#d5d5d5;"></div>
<div style="left:760px;top:962px;width:1px;height:17px;background:#e4e4e4;"></div>
<div style="left:1130px;top:962px;width:1px;height:17px;background:#e4e4e4;"></div>
<div style="top:966px;line-height:13px;font-size:12px;white-space:nowrap;color:#000;letter-spacing:-0.21px;left:591px;">Iktatószám</div>
<div style="top:966px;line-height:13px;font-size:12px;white-space:nowrap;color:#000;letter-spacing:-0.26px;left:763px;">Megjegyzés</div>
<div style="left:1205px;top:185px;width:16px;height:818px;background:#f0f0f0;"></div>
<svg style="left:1209px;top:192px" width="8" height="5"><defs><linearGradient id="g13" x1="0" y1="0" x2="1" y2="0.6"><stop offset="0" stop-color="#111"/><stop offset="1" stop-color="#9a9a9a"/></linearGradient></defs><path d="M0 4.5 L4.0 0 L8 4.5Z" fill="url(#g13)"/></svg>
<div style="left:1205px;top:203px;width:15px;height:587px;box-sizing:border-box;border:1px solid #979797;border-radius:2px;background:linear-gradient(90deg,#f5f5f5,#ebebeb 45%,#d8d8d8 55%,#c9c9cd);"></div>
<div style="left:1209px;top:492px;width:7px;height:1px;background:#333;"></div>
<div style="left:1209px;top:495px;width:7px;height:1px;background:#333;"></div>
<div style="left:1209px;top:498px;width:7px;height:1px;background:#333;"></div>
<svg style="left:1209px;top:993px" width="8" height="5"><defs><linearGradient id="g14" x1="0" y1="0" x2="1" y2="0.6"><stop offset="0" stop-color="#111"/><stop offset="1" stop-color="#9a9a9a"/></linearGradient></defs><path d="M0 0 L4.0 4.5 L8 0Z" fill="url(#g14)"/></svg>
<div style="left:390px;top:1004px;width:814px;height:17px;background:#ededed;"></div>
<svg style="left:396px;top:1009px" width="4" height="7"><defs><linearGradient id="g15" x1="0" y1="0.5" x2="1" y2="1"><stop offset="0" stop-color="#111"/><stop offset="1" stop-color="#9a9a9a"/></linearGradient></defs><path d="M4 0 L0 3.5 L4 7Z" fill="url(#g15)"/></svg>
<svg style="left:1195px;top:1009px" width="4" height="7"><defs><linearGradient id="g16" x1="0" y1="0" x2="1" y2="0.8"><stop offset="0" stop-color="#111"/><stop offset="1" stop-color="#9a9a9a"/></linearGradient></defs><path d="M0 0 L4 3.5 L0 7Z" fill="url(#g16)"/></svg>
<div style="left:408px;top:1005px;width:280px;height:15px;box-sizing:border-box;border:1px solid #979797;border-radius:2px;background:linear-gradient(#f5f5f5,#ebebeb 45%,#d8d8d8 55%,#c9c9cd);"></div>
<div style="left:545px;top:1009px;width:1px;height:7px;background:#333;"></div>
<div style="left:548px;top:1009px;width:1px;height:7px;background:#333;"></div>
<div style="left:551px;top:1009px;width:1px;height:7px;background:#333;"></div>
<div style="left:1205px;top:1005px;width:16px;height:16px;background:#f0f0f0;"></div>
</body></html>
